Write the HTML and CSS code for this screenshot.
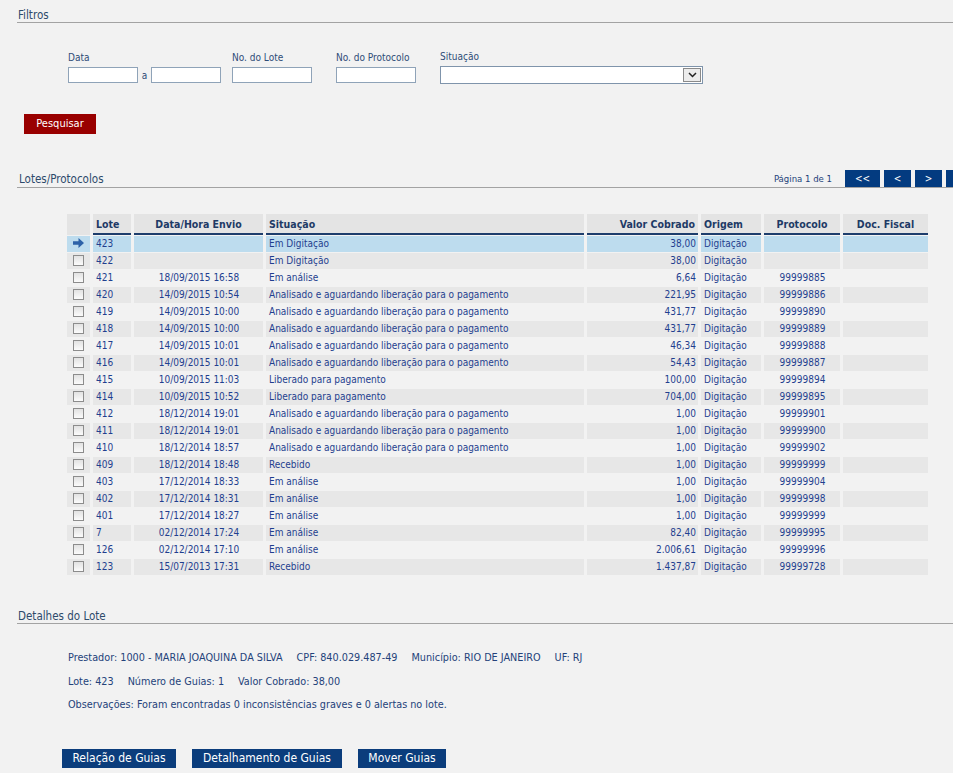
FILE: index.html
```html
<!DOCTYPE html>
<html lang="pt-BR">
<head>
<meta charset="utf-8">
<title>Lotes/Protocolos</title>
<link rel="stylesheet" href="styles.css">
</head>
<body>
<div class="page">
  <div class="section-title first">Filtros</div>

  <div class="filters">
    <div class="field f-data">
      <label>Data</label>
      <div class="inline">
        <span class="input w70"></span>
        <span class="sep">a</span>
        <span class="input w70"></span>
      </div>
    </div>
    <div class="field f-lote">
      <label>No. do Lote</label>
      <span class="input w80"></span>
    </div>
    <div class="field f-prot">
      <label>No. do Protocolo</label>
      <span class="input w80"></span>
    </div>
    <div class="field f-sit">
      <label>Situação</label>
      <div class="select">
        <span class="select-btn">
          <svg width="9" height="6" viewBox="0 0 9 6"><path d="M1 1 L4.5 4.5 L8 1" fill="none" stroke="#222" stroke-width="1.5"/></svg>
        </span>
      </div>
    </div>
  </div>

  <div class="btn-row-search">
    <span class="btn-red">Pesquisar</span>
  </div>

  <div class="section-title with-pager">
    <span class="title-text">Lotes/Protocolos</span>
    <div class="pager">
      <span class="page-info">Página 1 de 1</span>
      <span class="pbtn wide">&lt;&lt;</span>
      <span class="pbtn">&lt;</span>
      <span class="pbtn">&gt;</span>
      <span class="pbtn wide">&gt;&gt;</span>
    </div>
  </div>

  <table class="grid">
    <colgroup>
      <col class="c-chk"><col class="c-lote"><col class="c-data"><col class="c-sit">
      <col class="c-valor"><col class="c-orig"><col class="c-prot"><col class="c-doc">
    </colgroup>
    <thead>
      <tr>
        <th class="chk"></th>
        <th class="left">Lote</th>
        <th class="center">Data/Hora Envio</th>
        <th class="left">Situação</th>
        <th class="right">Valor Cobrado</th>
        <th class="left">Origem</th>
        <th class="center">Protocolo</th>
        <th class="center">Doc. Fiscal</th>
      </tr>
    </thead>
    <tbody id="rows">
      <tr class="sel">
        <td class="chk"><svg class="arrow" width="11" height="10" viewBox="0 0 11 10"><path d="M0 3.2 H5.5 V0 L11 5 L5.5 10 V6.8 H0 Z" fill="#2d62a8"/></svg></td>
        <td>423</td><td class="center"></td><td>Em Digitação</td><td class="right">38,00</td><td>Digitação</td><td class="center"></td><td></td>
      </tr>
      <tr class="alt"><td class="chk"><span class="cb"></span></td><td>422</td><td class="center"></td><td>Em Digitação</td><td class="right">38,00</td><td>Digitação</td><td class="center"></td><td></td></tr>
      <tr><td class="chk"><span class="cb"></span></td><td>421</td><td class="center">18/09/2015 16:58</td><td>Em análise</td><td class="right">6,64</td><td>Digitação</td><td class="center">99999885</td><td></td></tr>
      <tr class="alt"><td class="chk"><span class="cb"></span></td><td>420</td><td class="center">14/09/2015 10:54</td><td>Analisado e aguardando liberação para o pagamento</td><td class="right">221,95</td><td>Digitação</td><td class="center">99999886</td><td></td></tr>
      <tr><td class="chk"><span class="cb"></span></td><td>419</td><td class="center">14/09/2015 10:00</td><td>Analisado e aguardando liberação para o pagamento</td><td class="right">431,77</td><td>Digitação</td><td class="center">99999890</td><td></td></tr>
      <tr class="alt"><td class="chk"><span class="cb"></span></td><td>418</td><td class="center">14/09/2015 10:00</td><td>Analisado e aguardando liberação para o pagamento</td><td class="right">431,77</td><td>Digitação</td><td class="center">99999889</td><td></td></tr>
      <tr><td class="chk"><span class="cb"></span></td><td>417</td><td class="center">14/09/2015 10:01</td><td>Analisado e aguardando liberação para o pagamento</td><td class="right">46,34</td><td>Digitação</td><td class="center">99999888</td><td></td></tr>
      <tr class="alt"><td class="chk"><span class="cb"></span></td><td>416</td><td class="center">14/09/2015 10:01</td><td>Analisado e aguardando liberação para o pagamento</td><td class="right">54,43</td><td>Digitação</td><td class="center">99999887</td><td></td></tr>
      <tr><td class="chk"><span class="cb"></span></td><td>415</td><td class="center">10/09/2015 11:03</td><td>Liberado para pagamento</td><td class="right">100,00</td><td>Digitação</td><td class="center">99999894</td><td></td></tr>
      <tr class="alt"><td class="chk"><span class="cb"></span></td><td>414</td><td class="center">10/09/2015 10:52</td><td>Liberado para pagamento</td><td class="right">704,00</td><td>Digitação</td><td class="center">99999895</td><td></td></tr>
      <tr><td class="chk"><span class="cb"></span></td><td>412</td><td class="center">18/12/2014 19:01</td><td>Analisado e aguardando liberação para o pagamento</td><td class="right">1,00</td><td>Digitação</td><td class="center">99999901</td><td></td></tr>
      <tr class="alt"><td class="chk"><span class="cb"></span></td><td>411</td><td class="center">18/12/2014 19:01</td><td>Analisado e aguardando liberação para o pagamento</td><td class="right">1,00</td><td>Digitação</td><td class="center">99999900</td><td></td></tr>
      <tr><td class="chk"><span class="cb"></span></td><td>410</td><td class="center">18/12/2014 18:57</td><td>Analisado e aguardando liberação para o pagamento</td><td class="right">1,00</td><td>Digitação</td><td class="center">99999902</td><td></td></tr>
      <tr class="alt"><td class="chk"><span class="cb"></span></td><td>409</td><td class="center">18/12/2014 18:48</td><td>Recebido</td><td class="right">1,00</td><td>Digitação</td><td class="center">99999999</td><td></td></tr>
      <tr><td class="chk"><span class="cb"></span></td><td>403</td><td class="center">17/12/2014 18:33</td><td>Em análise</td><td class="right">1,00</td><td>Digitação</td><td class="center">99999904</td><td></td></tr>
      <tr class="alt"><td class="chk"><span class="cb"></span></td><td>402</td><td class="center">17/12/2014 18:31</td><td>Em análise</td><td class="right">1,00</td><td>Digitação</td><td class="center">99999998</td><td></td></tr>
      <tr><td class="chk"><span class="cb"></span></td><td>401</td><td class="center">17/12/2014 18:27</td><td>Em análise</td><td class="right">1,00</td><td>Digitação</td><td class="center">99999999</td><td></td></tr>
      <tr class="alt"><td class="chk"><span class="cb"></span></td><td>7</td><td class="center">02/12/2014 17:24</td><td>Em análise</td><td class="right">82,40</td><td>Digitação</td><td class="center">99999995</td><td></td></tr>
      <tr><td class="chk"><span class="cb"></span></td><td>126</td><td class="center">02/12/2014 17:10</td><td>Em análise</td><td class="right">2.006,61</td><td>Digitação</td><td class="center">99999996</td><td></td></tr>
      <tr class="alt"><td class="chk"><span class="cb"></span></td><td>123</td><td class="center">15/07/2013 17:31</td><td>Recebido</td><td class="right">1.437,87</td><td>Digitação</td><td class="center">99999728</td><td></td></tr>
    </tbody>
  </table>

  <div class="section-title details-title">Detalhes do Lote</div>

  <div class="details">
    <div class="drow"><span>Prestador: 1000 - MARIA JOAQUINA DA SILVA</span><span>CPF: 840.029.487-49</span><span>Município: RIO DE JANEIRO</span><span>UF: RJ</span></div>
    <div class="drow"><span>Lote: 423</span><span>Número de Guias: 1</span><span>Valor Cobrado: 38,00</span></div>
    <div class="drow"><span>Observações: Foram encontradas 0 inconsistências graves e 0 alertas no lote.</span></div>
  </div>

  <div class="actions">
    <span class="btn-navy b1">Relação de Guias</span>
    <span class="btn-navy b2">Detalhamento de Guias</span>
    <span class="btn-navy b3">Mover Guias</span>
  </div>
</div>
</body>
</html>
```
FILE: styles.css
```css
html, body {
  margin: 0;
  padding: 0;
  background: #f2f2f2;
  overflow: hidden;
}
body {
  font-family: "DejaVu Sans Condensed", "DejaVu Sans", sans-serif;
  font-stretch: condensed;
  font-size: 10px;
  color: #24427a;
}
.page {
  width: 953px;
  height: 773px;
  overflow: hidden;
}
.section-title {
  margin-left: 17px;
  padding-left: 1px;
  border-bottom: 1px solid #a3a3a3;
  font-size: 11.5px;
  line-height: 14px;
  color: #2d4a6b;
}
.section-title.first {
  padding-top: 8px;
}
.filters {
  display: flex;
  align-items: flex-end;
  margin-top: 27px;
  padding-left: 68px;
}
.field label {
  display: block;
  line-height: 13px;
  margin-bottom: 3px;
  color: #2e4c77;
}
.f-data { width: 164px; }
.f-lote { width: 104px; }
.f-prot { width: 104px; }
.inline {
  display: flex;
  align-items: center;
}
.sep {
  width: 13px;
  text-align: center;
  color: #2e4c77;
}
.input {
  display: block;
  height: 14px;
  background: #fff;
  border: 1px solid #8fa3b8;
}
.w70 { width: 68px; }
.w80 { width: 78px; }
.select {
  width: 261px;
  height: 16px;
  background: #fff;
  border: 1px solid #7f94ab;
  display: flex;
  justify-content: flex-end;
  align-items: center;
  margin-bottom: -1px;
}
.select-btn {
  width: 16px;
  height: 12px;
  margin-right: 1px;
  border: 1px solid #8a8a8a;
  background: #ececec;
  display: flex;
  align-items: center;
  justify-content: center;
}
.btn-row-search {
  margin-top: 31px;
  padding-left: 24px;
}
.btn-red {
  display: inline-block;
  width: 72px;
  height: 20px;
  line-height: 20px;
  text-align: center;
  background: #990000;
  color: #fff;
  font-size: 11px;
}
.with-pager {
  margin-top: 36px;
  display: flex;
  justify-content: space-between;
  align-items: flex-end;
  height: 17px;
  padding-left: 2px;
}
.with-pager .title-text {
  line-height: 14px;
  padding-bottom: 1px;
}
.pager {
  display: flex;
  align-items: flex-end;
  margin-right: -28px;
}
.page-info {
  font-size: 9.5px;
  color: #24427a;
  margin-right: 13px;
  line-height: 14px;
  padding-bottom: 1px;
}
.pbtn {
  width: 27px;
  height: 17px;
  line-height: 17px;
  margin-left: 4px;
  text-align: center;
  background: #033b80;
  color: #fff;
  font-size: 10px;
}
.pbtn.wide { width: 35px; }
.page-info + .pbtn { margin-left: 0; }

.grid {
  margin-top: 25px;
  margin-left: 64px;
  border-collapse: separate;
  border-spacing: 3px 1px;
  table-layout: fixed;
  width: 867px;
}
.c-chk { width: 23px; }
.c-lote { width: 38px; }
.c-data { width: 129px; }
.c-sit { width: 318px; }
.c-valor { width: 111px; }
.c-orig { width: 60px; }
.c-prot { width: 76px; }
.c-doc { width: 85px; }
.grid th {
  height: 18px;
  padding: 1px 3px 0;
  background: #e4e4e4;
  border-bottom: 2px solid #1d3d6c;
  color: #1e3a66;
  font-weight: bold;
  font-size: 10.5px;
  white-space: nowrap;
}
.grid th.chk {
  border-bottom: 2px solid #e4e4e4;
}
.grid td {
  height: 16px;
  padding: 0 2px 0 3px;
  color: #1f3f8f;
  white-space: nowrap;
  overflow: hidden;
  line-height: 16px;
}
.grid tr.alt td { background: #e7e7e7; }
.grid tr.sel td { background: #bddcee; }
.grid .left { text-align: left; }
.grid .center { text-align: center; }
.grid .right { text-align: right; }
.grid td.chk {
  text-align: center;
  padding: 0;
}
.cb {
  display: inline-block;
  width: 9px;
  height: 9px;
  border: 1px solid #8c8c8c;
  background: linear-gradient(#e2e2e2, #fbfbfb);
  vertical-align: middle;
  margin-top: -2px;
}
.arrow {
  vertical-align: middle;
  margin-top: -2px;
}

.details-title {
  margin-top: 33px;
}
.details {
  margin-top: 27px;
  padding-left: 68px;
  font-size: 10.75px;
}
.drow {
  display: flex;
  gap: 14px;
  line-height: 14px;
  margin-bottom: 9.5px;
}
.actions {
  margin-top: 37px;
  padding-left: 62px;
  display: flex;
  gap: 16px;
}
.btn-navy {
  height: 19px;
  line-height: 19px;
  text-align: center;
  background: #0b3d7c;
  color: #fff;
  font-size: 12px;
}
.b1 { width: 114px; }
.b2 { width: 150px; }
.b3 { width: 88px; }
```
